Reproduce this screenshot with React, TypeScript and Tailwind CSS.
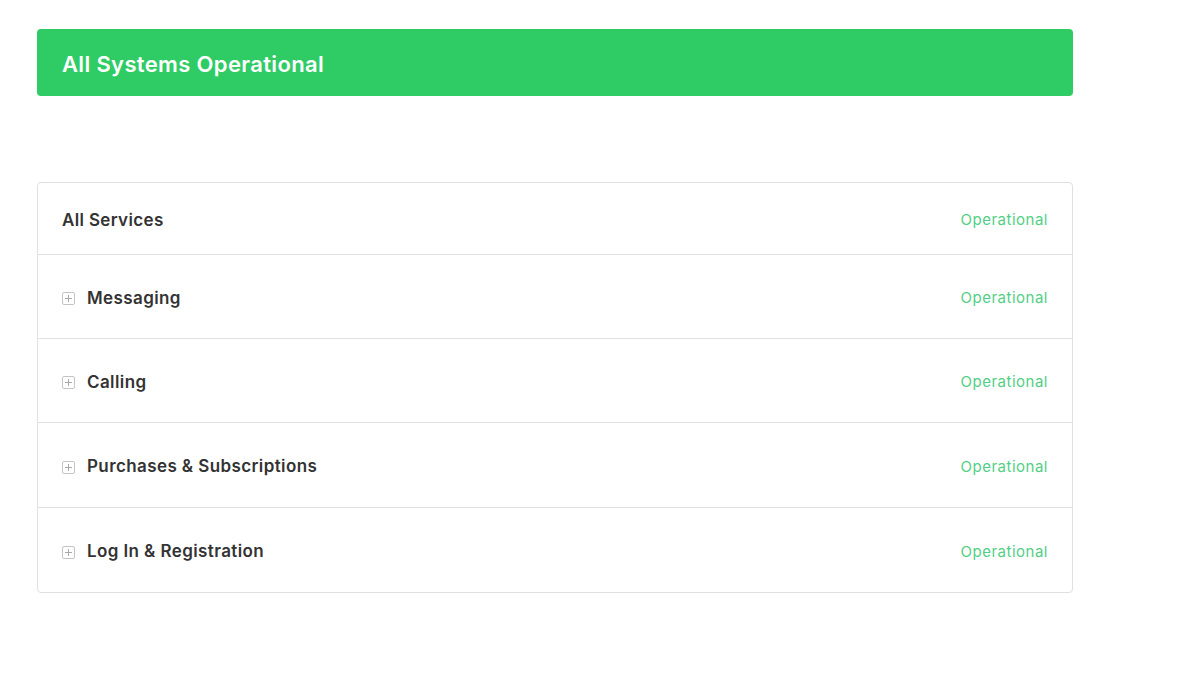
import React from 'react';

const services = [
  { name: 'Messaging', h: 'h-[84px]' },
  { name: 'Calling', h: 'h-[84px]' },
  { name: 'Purchases & Subscriptions', h: 'h-[85px]' },
  { name: 'Log In & Registration', h: 'h-[84px]' },
];

const PlusBox = () => (
  <svg width="13" height="13" viewBox="0 0 13 13" className="flex-shrink-0">
    <rect x="0.5" y="0.5" width="12" height="12" rx="1.5" fill="none" stroke="#c4c4c4" />
    <path d="M6.5 3v7M3 6.5h7" stroke="#a8a8a8" strokeWidth="1" />
  </svg>
);

export default function App() {
  return (
    <div className="min-h-screen bg-white" style={{ fontFamily: 'Inter, "Noto Sans", sans-serif' }}>
      <div className="w-[1036px] ml-[37px] pt-[29px]">
        <div className="h-[67px] bg-[#2fcc66] rounded-[4px] flex items-center px-[25px]">
          <span className="text-white text-[22px] font-semibold tracking-[0.35px] pt-[3px]">All Systems Operational</span>
        </div>

        <div className="mt-[86px] border border-[#e0e0e0] rounded-[4px]">
          <div className="h-[72px] flex items-center justify-between px-[24px] border-b border-[#e0e0e0]">
            <span className="text-[17px] font-semibold text-[#333333] tracking-[0.35px] pt-[4px]">All Services</span>
            <span className="text-[15px] text-[#52cf85] tracking-[0.5px] pt-[4px]">Operational</span>
          </div>
          {services.map((s, i) => (
            <div
              key={s.name}
              className={`${s.h} flex items-center justify-between px-[24px] ${i < services.length - 1 ? 'border-b border-[#e0e0e0]' : ''}`}
            >
              <div className="flex items-center gap-[12px] pt-[4px]">
                <PlusBox />
                <span className="text-[17px] font-semibold text-[#333333] tracking-[0.4px]">{s.name}</span>
              </div>
              <span className="text-[15px] text-[#52cf85] tracking-[0.5px] pt-[4px]">Operational</span>
            </div>
          ))}
        </div>
      </div>
    </div>
  );
}
